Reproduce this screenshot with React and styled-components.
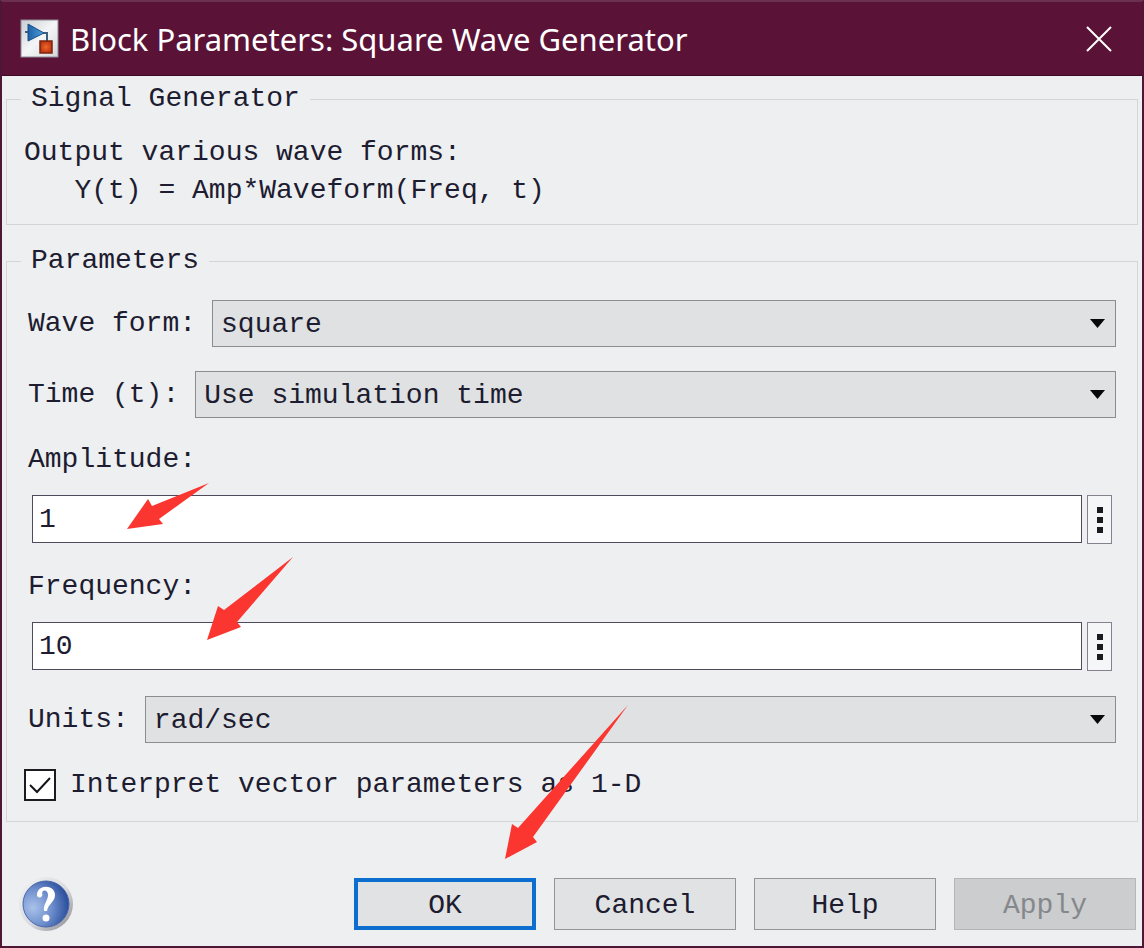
import React from "react";
import styled, { createGlobalStyle } from "styled-components";

const MONO = '"Liberation Mono", "Courier New", monospace';
const INK = "#1d1c30";

const GlobalStyle = createGlobalStyle`
  * { box-sizing: border-box; }
  body { margin: 0; background: #edeff1; }
`;

const Dialog = styled.form`
  position: relative;
  display: flex;
  flex-direction: column;
  min-height: 100vh;
  border: 2px solid #4d1536;
  border-top-color: #6b2f50;
  background: #edeff1;
  color: ${INK};
  font-family: ${MONO};
  font-size: 28px;
`;

const TitleBar = styled.header`
  display: flex;
  align-items: center;
  gap: 10px;
  height: 74px;
  padding: 0 30px 0 18px;
  background: #5a1337;
  border-bottom: 1px solid #3d0a24;
  color: #fff;
`;

const Title = styled.h1`
  flex: 1;
  margin: 0;
  font: 400 31px/40px "Noto Sans", "Open Sans", sans-serif;
`;

const CloseButton = styled.button`
  display: flex;
  padding: 0;
  border: 0;
  background: none;
  color: #fff;
`;

const Content = styled.main`
  display: flex;
  flex-direction: column;
  gap: 20px;
  padding: 7px 4px 0;
`;

const Group = styled.fieldset`
  min-width: 0;
  margin: 0;
  padding: 0 14px;
  border: 1px solid #d3d5d9;
`;

const Legend = styled.legend`
  padding: 0 10px;
  line-height: 32px;
`;

const Description = styled.p`
  margin: 0;
  padding: 19px 3px 14px;
  line-height: 38px;
  white-space: pre-wrap;
`;

const Fields = styled.div`
  display: flex;
  flex-direction: column;
  gap: 24px;
  padding: 23px 7px 18px;
`;

const SelectRow = styled.div`
  display: flex;
  align-items: center;
  gap: 16px;
`;

const Label = styled.label`
  line-height: 36px;
  white-space: nowrap;
`;

const SelectBox = styled.div`
  position: relative;
  flex: 1;
  min-width: 0;
`;

const Select = styled.select`
  display: block;
  appearance: none;
  width: 100%;
  height: 47px;
  padding: 2px 40px 0 8px;
  border: 1px solid #8b8d8f;
  border-radius: 0;
  background: #dfe1e2;
  color: inherit;
  font: inherit;
`;

const SelectArrow = styled.svg`
  position: absolute;
  right: 11px;
  top: 19px;
  pointer-events: none;
`;

const Field = styled.div`
  display: flex;
  flex-direction: column;
  gap: 17px;
  padding-bottom: 1px;
`;

const EditRow = styled.div`
  display: flex;
  gap: 5px;
  padding: 0 4px;
`;

const TextInput = styled.input`
  flex: 1;
  min-width: 0;
  height: 48px;
  padding: 0 6px;
  border: 1px solid #4f4a5c;
  border-radius: 0;
  background: #fff;
  color: inherit;
  font: inherit;
`;

const MoreButton = styled.button`
  display: flex;
  align-items: center;
  justify-content: center;
  width: 25px;
  height: 49px;
  padding: 0;
  border: 1px solid #86808f;
  background: #f5f6f8;
`;

const CheckRow = styled.div`
  display: flex;
  align-items: center;
  gap: 14px;
  margin-left: -4px;
`;

const CheckBox = styled.div`
  position: relative;
  width: 32px;
  height: 32px;
`;

const CheckInput = styled.input`
  display: block;
  appearance: none;
  width: 32px;
  height: 32px;
  margin: 0;
  border: 2px solid #1c1b22;
  background: #fff;

  &:not(:checked) + svg { display: none; }
`;

const CheckMark = styled.svg`
  position: absolute;
  inset: 0;
  pointer-events: none;
`;

const Footer = styled.footer`
  display: flex;
  align-items: center;
  gap: 18px;
  padding: 54px 6px 14px 16px;
`;

const HelpIconButton = styled.button`
  display: flex;
  margin-right: auto;
  padding: 0;
  border: 0;
  background: none;
`;

const PushButton = styled.button`
  width: 182px;
  height: 52px;
  padding: 2px 0 0;
  border: ${(p) => (p.$primary ? "4px solid #0c6fd0" : "1px solid #939597")};
  background: #e0e2e3;
  color: inherit;
  font: inherit;

  &:disabled {
    border-color: #b4b6b8;
    background: #cbcdcf;
    color: #85878b;
  }
`;

const Pointer = styled.svg`
  position: absolute;
  left: ${(p) => p.$x}px;
  top: ${(p) => p.$y}px;
  pointer-events: none;
`;

function SimulinkIcon() {
  return (
    <svg width="40" height="40" viewBox="0 0 40 40" aria-hidden="true">
      <defs>
        <linearGradient id="plate" x1="0" y1="0" x2="1" y2="1">
          <stop offset="0" stopColor="#c9cdd1" />
          <stop offset="0.5" stopColor="#f4f5f6" />
          <stop offset="1" stopColor="#d3d6da" />
        </linearGradient>
        <linearGradient id="gain" x1="0" y1="0" x2="1" y2="0">
          <stop offset="0" stopColor="#1c5fa5" />
          <stop offset="1" stopColor="#4fa3dc" />
        </linearGradient>
        <radialGradient id="sink">
          <stop offset="0" stopColor="#f0672c" />
          <stop offset="1" stopColor="#bf3612" />
        </radialGradient>
      </defs>
      <rect x="1" y="1" width="37" height="37" fill="url(#plate)" stroke="#8f8b96" />
      <path d="M5 13h3M23 14h4v8" fill="none" stroke="#3d5e7c" strokeWidth="2" />
      <path d="M8 5v17l16-8z" fill="url(#gain)" stroke="#174f86" />
      <rect x="20" y="22" width="12" height="12" fill="url(#sink)" stroke="#7a2410" strokeWidth="1.5" />
    </svg>
  );
}

function HelpIcon() {
  return (
    <svg width="56" height="56" viewBox="0 0 56 56" aria-hidden="true">
      <defs>
        <linearGradient id="rim" x1="0" y1="0" x2="1" y2="1">
          <stop offset="0" stopColor="#f4f4f6" />
          <stop offset="0.55" stopColor="#d9d9df" />
          <stop offset="1" stopColor="#85838c" />
        </linearGradient>
        <radialGradient id="ball" cx="0.22" cy="0.58" r="0.8">
          <stop offset="0" stopColor="#a9c2ea" />
          <stop offset="0.5" stopColor="#6f8fcd" />
          <stop offset="1" stopColor="#254a98" />
        </radialGradient>
      </defs>
      <circle cx="28" cy="28" r="27" fill="url(#rim)" />
      <circle cx="28" cy="28" r="23" fill="url(#ball)" stroke="#4566a8" />
      <path
        d="M19 19C19 8 37 8 37 19c0 7-7 9-8 16h-3c-1-7 4-10 4-16 0-5-5-6-6-2 2 5-5 6-5 2z"
        fill="#fff"
      />
      <circle cx="28" cy="42" r="3.5" fill="#fff" />
    </svg>
  );
}

function Dropdown({ id, label, options }) {
  return (
    <SelectRow>
      <Label htmlFor={id}>{label}</Label>
      <SelectBox>
        <Select id={id} defaultValue={options[0]}>
          {options.map((o) => (
            <option key={o}>{o}</option>
          ))}
        </Select>
        <SelectArrow width="15" height="9" viewBox="0 0 15 9" aria-hidden="true">
          <path d="M0 0h15L7.500 9z" fill="#08080c" />
        </SelectArrow>
      </SelectBox>
    </SelectRow>
  );
}

function EditField({ id, label, value }) {
  return (
    <Field>
      <Label htmlFor={id}>{label}</Label>
      <EditRow>
        <TextInput id={id} type="text" defaultValue={value} />
        <MoreButton type="button" aria-label={`${label} options`}>
          <svg width="6" height="26" viewBox="0 0 6 26" fill="#1b1b22" aria-hidden="true">
            <path d="M0 0h6v6H0zM0 10h6v6H0zM0 20h6v6H0z" />
          </svg>
        </MoreButton>
      </EditRow>
    </Field>
  );
}

const ARROWS = [
  { x: 124, y: 480, w: 84, h: 50, points: "1,47 22,17 26,24 83,1 33,37 37,42" },
  { x: 204, y: 554, w: 88, h: 86, points: "1,84 12,50 18,54 87,1 31,66 35,71" },
  { x: 502, y: 702, w: 126, h: 158, points: "1,155 8,120 14,124 124,1 29,133 33,138" },
];

export default function App() {
  return (
    <>
      <GlobalStyle />
      <Dialog onSubmit={(e) => e.preventDefault()}>
        <TitleBar>
          <SimulinkIcon />
          <Title>Block Parameters: Square Wave Generator</Title>
          <CloseButton type="button" aria-label="Close">
            <svg width="26" height="26" viewBox="0 0 26 26" fill="none" stroke="currentColor" strokeWidth="2" aria-hidden="true">
              <path d="M1 1l24 24M25 1L1 25" />
            </svg>
          </CloseButton>
        </TitleBar>

        <Content>
          <Group>
            <Legend>Signal Generator</Legend>
            <Description>{"Output various wave forms:\n   Y(t) = Amp*Waveform(Freq, t)"}</Description>
          </Group>

          <Group>
            <Legend>Parameters</Legend>
            <Fields>
              <Dropdown id="waveform" label="Wave form:" options={["square", "sine", "sawtooth", "random"]} />
              <Dropdown id="time" label="Time (t):" options={["Use simulation time", "Use external signal"]} />
              <EditField id="amplitude" label="Amplitude:" value="1" />
              <EditField id="frequency" label="Frequency:" value="10" />
              <Dropdown id="units" label="Units:" options={["rad/sec", "Hertz"]} />
              <CheckRow>
                <CheckBox>
                  <CheckInput id="vector" type="checkbox" defaultChecked />
                  <CheckMark width="32" height="32" viewBox="0 0 32 32" fill="none" stroke="#16151c" strokeWidth="2" aria-hidden="true">
                    <path d="M6 16l7 7L26 9" />
                  </CheckMark>
                </CheckBox>
                <Label htmlFor="vector">Interpret vector parameters as 1-D</Label>
              </CheckRow>
            </Fields>
          </Group>
        </Content>

        <Footer>
          <HelpIconButton type="button" aria-label="About this block">
            <HelpIcon />
          </HelpIconButton>
          <PushButton type="submit" $primary>OK</PushButton>
          <PushButton type="button">Cancel</PushButton>
          <PushButton type="button">Help</PushButton>
          <PushButton type="button" disabled>Apply</PushButton>
        </Footer>

        {ARROWS.map((a) => (
          <Pointer key={a.y} $x={a.x} $y={a.y} width={a.w} height={a.h} viewBox={`0 0 ${a.w} ${a.h}`} aria-hidden="true">
            <polygon points={a.points} fill="#fb3530" />
          </Pointer>
        ))}
      </Dialog>
    </>
  );
}
